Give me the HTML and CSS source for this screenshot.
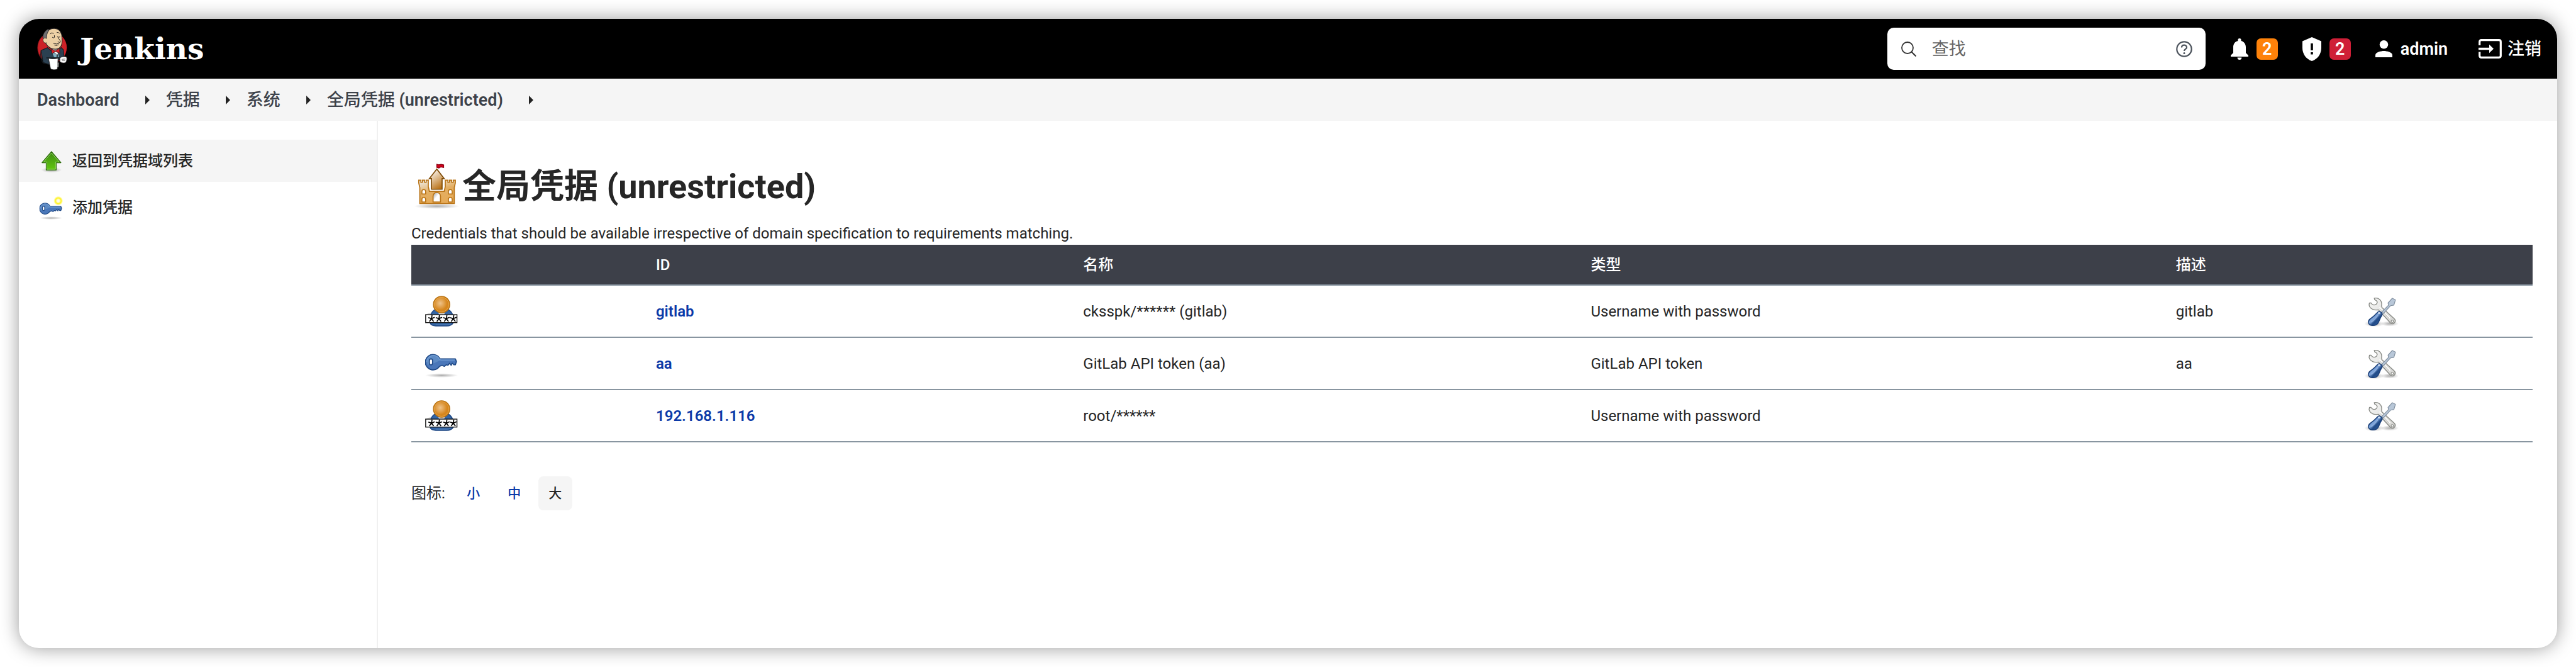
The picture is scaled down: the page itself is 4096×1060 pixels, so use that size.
FILE: index.html
```html
<!DOCTYPE html>
<html lang="zh-CN">
<head>
<meta charset="utf-8">
<title>全局凭据 (unrestricted) [Jenkins]</title>
<link rel="stylesheet" href="styles.css">
</head>
<body>
<svg class="sprite" aria-hidden="true">
  <defs>
    <linearGradient id="g-green" x1="0" y1="0" x2="0" y2="1"><stop offset="0" stop-color="#3d8a14"/><stop offset="1" stop-color="#62c810"/></linearGradient>
    <linearGradient id="g-tower" x1="0.2" y1="0" x2="0.7" y2="1"><stop offset="0" stop-color="#fff"/><stop offset="1" stop-color="#b86e10"/></linearGradient>
    <linearGradient id="g-wall" x1="0" y1="0" x2="0.4" y2="1"><stop offset="0" stop-color="#eee"/><stop offset="0.55" stop-color="#e3ae62"/><stop offset="1" stop-color="#e6ab58"/></linearGradient>
    <linearGradient id="g-gate" x1="0" y1="0" x2="0.7" y2="0.7"><stop offset="0" stop-color="#999"/><stop offset="0.7" stop-color="#fff"/></linearGradient>
    <linearGradient id="g-steel" x1="0" y1="0" x2="1" y2="1"><stop offset="0" stop-color="#f7f7f6"/><stop offset="1" stop-color="#d3d3d0"/></linearGradient>
    <linearGradient id="g-handle" x1="0" y1="0" x2="1" y2="1"><stop offset="0" stop-color="#3465a4"/><stop offset="0.45" stop-color="#7fa6dc"/><stop offset="0.6" stop-color="#204a87"/><stop offset="1" stop-color="#3465a4"/></linearGradient>
    <radialGradient id="g-head" cx="0.42" cy="0.42" r="0.6"><stop offset="0" stop-color="#efc38a"/><stop offset="0.7" stop-color="#d6861d"/><stop offset="1" stop-color="#d6861d"/></radialGradient>
    <radialGradient id="g-glow"><stop offset="0" stop-color="#fff"/><stop offset="0.3" stop-color="#fffbd0"/><stop offset="0.6" stop-color="#fff31e"/><stop offset="1" stop-color="#fff31e" stop-opacity="0"/></radialGradient>
    <radialGradient id="g-shadow"><stop offset="0" stop-color="#000" stop-opacity="0.32"/><stop offset="1" stop-color="#000" stop-opacity="0"/></radialGradient>
  </defs>
  <symbol id="i-key" viewBox="0 0 64 64">
    <ellipse cx="31" cy="54" rx="31" ry="4" fill="url(#g-shadow)"/>
    <path d="M28 23H57L59 28L57 34H54L51 31L49 35L46 31L43 35L40 34L36 37L32 35L27 37A14.500 14.500 0 1 1 28 23Z" fill="#4a77b9" stroke="#204a87" stroke-width="2" stroke-linejoin="round"/>
    <path d="M3 29A12.500 12.500 0 0 1 27 24L30 25H56" fill="none" stroke="#6f9bd2" stroke-width="2"/>
    <path d="M4 34C14 34 20 29 28 26A12.500 12.500 0 0 0 4 26Z" fill="#729fcf" opacity="0.5"/>
    <rect x="8" y="23" width="6" height="11" rx="3" fill="#fff" stroke="#204a87" stroke-width="2"/>
  </symbol>
  <symbol id="i-user" viewBox="0 0 64 64">
    <path d="M2 38C6 34 12 35 16 34V40H2Z" fill="#aaa" opacity="0.6"/>
    <path d="M10 42C12 31 18 26 31 26S50 31 53 42V53C50 58 46 59 41 59H20C15 59 12 58 10 55Z" fill="#3465a4" stroke="#204a87" stroke-width="2"/>
    <path d="M20 57H40C46 57 48 56 50 53" fill="none" stroke="#729fcf" stroke-width="1" opacity="0.6"/>
    <path d="M24 30H38L36 38H26Z" fill="#d9d9d9"/>
    <circle cx="31" cy="19" r="15.500" fill="url(#g-head)" stroke="#b56d0a" stroke-width="1.500"/>
    <circle cx="31" cy="19" r="13.800" fill="none" stroke="#e9a84e" stroke-width="1"/>
    <rect x="1" y="38" width="59" height="15" fill="#fff" stroke="#111" stroke-width="1.600"/>
    <g fill="none" stroke="#000" stroke-width="2">
      <path id="i-star" d="M12 45.500L13 39M12 45.500L18 43M12 45.500L6 43.500M12 45.500L8 51M12 45.500L16 51"/>
      <use href="#i-star" x="14"/><use href="#i-star" x="28"/><use href="#i-star" x="41"/>
    </g>
  </symbol>
  <symbol id="i-tools" viewBox="0 0 64 64">
    <ellipse cx="18" cy="55" rx="19" ry="6" fill="url(#g-shadow)"/>
    <ellipse cx="47" cy="55" rx="17" ry="5" fill="url(#g-shadow)"/>
    <path d="M18 7C26 5 32 11 32 18C32 21 31 23 33 25L56 46C60 50 56 56 51 55L48 53L26 29C22 29 19 30 15 28C10 26 7 21 9 16L12 16C14 20 19 21 22 18C25 15 24 12 19 10Z" fill="url(#g-steel)" stroke="#888a85" stroke-width="1.600" stroke-linejoin="round"/>
    <path d="M28 24L48 45" stroke="#fff" stroke-width="2"/>
    <path d="M29 27L46 45" stroke="#babdb6" stroke-width="1"/>
    <circle cx="52" cy="50.500" r="2.200" fill="#fff" stroke="#888a85" stroke-width="1.400"/>
    <path d="M32 33L45 20L44 16L52 7L58 10L55 20L49 21L35 36Z" fill="#b8c7d8" stroke="#8290a0" stroke-width="1.400" stroke-linejoin="round"/>
    <path d="M25 33C29 30 35 36 32 40C29 44 28 49 25 54C21 60 9 60 7 53C6 46 15 44 20 38Z" fill="url(#g-handle)" stroke="#1b3f78" stroke-width="1.800"/>
    <path d="M12 52C17 50 21 44 25 39" fill="none" stroke="#9dbbe6" stroke-width="2" opacity="0.7"/>
    <circle cx="27" cy="35" r="2" fill="#dfe9f7" opacity="0.8"/>
  </symbol>
</svg>

<div class="window">
  <header class="header">
    <a class="logo" href="#">
      <svg class="butler" viewBox="0 0 170 237" aria-hidden="true">
        <ellipse cx="85" cy="112" rx="82" ry="86" fill="#cc2127"/>
        <path d="M85 26A82 86 0 0 0 3 112C3 140 14 165 30 178" fill="none" stroke="#8c161b" stroke-width="3"/>
        <path d="M22 128L58 112L104 150L136 112L148 124L152 168L130 174L100 206L66 206L34 196Z" fill="#2b4051" stroke="#151a1f" stroke-width="4" stroke-linejoin="round"/>
        <path d="M22 130C16 160 24 190 36 200L70 206" fill="none" stroke="#151a1f" stroke-width="4"/>
        <path d="M80 118L108 168L130 118L100 112Z" fill="#fff" stroke="#151a1f" stroke-width="2"/>
        <path d="M80 132L94 166L112 170L108 148ZM128 132L124 166L112 170Z" fill="#81b0c4" stroke="#151a1f" stroke-width="2"/>
        <path d="M46 70C46 34 60 2 98 4C128 6 140 30 140 56C142 76 142 98 130 110C118 122 96 124 78 116C64 110 54 98 48 86Z" fill="#ecd0a5" stroke="#231f20" stroke-width="4"/>
        <path d="M58 10C42 20 32 38 32 56L42 64L54 60C52 44 56 28 70 10Z" fill="#6f6f70" stroke="#231f20" stroke-width="3"/>
        <path d="M52 60C40 54 30 62 34 74C38 86 46 88 54 84" fill="#ecd0a5" stroke="#231f20" stroke-width="3"/>
        <path d="M74 34Q82 24 92 32M112 26Q122 24 126 32M86 54Q92 62 98 54L97 44M114 50Q122 58 128 52M118 56C126 68 134 76 130 82C126 84 120 82 118 78M92 88Q110 96 124 88M98 98Q110 104 120 96" fill="none" stroke="#231f20" stroke-width="3.500" stroke-linecap="round"/>
        <path d="M78 118L102 130L126 116L128 144L104 134L84 146Z" fill="#d81f27" stroke="#231f20" stroke-width="3" stroke-linejoin="round"/>
        <path d="M64 172C80 176 98 176 118 172L114 234C102 238 86 238 76 232Z" fill="#fff" stroke="#231f20" stroke-width="3"/>
        <path d="M118 196L117 222" stroke="#ccc" stroke-width="6"/>
        <path d="M128 170C138 162 160 160 166 166C170 176 166 190 160 196C148 202 134 196 128 190Z" fill="#fff" stroke="#231f20" stroke-width="3"/>
        <path d="M138 178L160 176M140 186L158 186" stroke="#555" stroke-width="3"/>
        <path d="M52 170H130" stroke="#151a1f" stroke-width="5"/>
      </svg>
      <span class="logo-name">Jenkins</span>
    </a>
    <form class="search" role="search">
      <svg class="search-icon" viewBox="0 0 24 24" aria-hidden="true"><circle cx="10" cy="10" r="9" fill="none" stroke="#333" stroke-width="1.800"/><path d="M16 16L23.500 23.500" stroke="#333" stroke-width="2"/></svg>
      <input class="search-input" type="text" placeholder="查找" aria-label="查找">
      <a class="help" href="#" aria-label="帮助">
        <svg viewBox="0 0 26 26" aria-hidden="true"><circle cx="13" cy="13" r="11.700" fill="none" stroke="#4d545d" stroke-width="2.200"/><path d="M9 10.500C9 5.500 17 5.500 17 10.200C17 13 13 13 13 16" fill="none" stroke="#4d545d" stroke-width="2.200"/><circle cx="13" cy="19.400" r="1.500" fill="#4d545d"/></svg>
      </a>
    </form>
    <nav class="tools">
      <a class="alert" href="#" aria-label="通知">
        <svg class="bell" viewBox="0 0 28 34" aria-hidden="true"><path d="M14 0A2.600 2.600 0 0 1 16.600 2.600V4C21.500 5.200 24 9.500 24 14V23L28 27V29H0V27L4 23V14C4 9.500 6.500 5.200 11.400 4V2.600A2.600 2.600 0 0 1 14 0ZM10.600 30.500H17.400A3.400 3.400 0 0 1 10.600 30.500Z" fill="#fff"/></svg>
        <span class="badge badge-warn">2</span>
      </a>
      <a class="alert" href="#" aria-label="安全警告">
        <svg class="shield" viewBox="0 0 30 38" aria-hidden="true"><path d="M15 0L30 6.500V17C30 27 24 35 15 38C6 35 0 27 0 17V6.500Z" fill="#fff"/><path d="M13.200 10H16.800V21H13.200ZM13.200 24H16.800V27.600H13.200Z" fill="#000"/></svg>
        <span class="badge badge-error">2</span>
      </a>
      <a class="account" href="#">
        <svg class="person" viewBox="0 0 27 27" aria-hidden="true"><circle cx="13.500" cy="6.800" r="6.800" fill="#fff"/><path d="M0 27V23.500C0 19 9 17 13.500 17S27 19 27 23.500V27Z" fill="#fff"/></svg>
        <span>admin</span>
      </a>
      <a class="logout" href="#">
        <svg class="exit" viewBox="0 0 37 31" aria-hidden="true"><path d="M1.700 10V4.500Q1.700 1.700 4.500 1.700H32.500Q35.300 1.700 35.300 4.500V26.500Q35.300 29.300 32.500 29.300H4.500Q1.700 29.300 1.700 26.500V20.500" fill="none" stroke="#fff" stroke-width="3.200"/><path d="M0 13.800H17V8.700L24 15.500L17 22.300V17.200H0Z" fill="#fff"/></svg>
        <span>注销</span>
      </a>
    </nav>
  </header>

  <nav class="breadcrumbs">
    <a href="#"><b>Dashboard</b></a><i class="arrow"></i>
    <a href="#">凭据</a><i class="arrow"></i>
    <a href="#">系统</a><i class="arrow"></i>
    <a href="#">全局凭据 <b>(unrestricted)</b></a><i class="arrow"></i>
  </nav>

  <div class="page">
    <aside class="sidebar">
      <a class="task task-active" href="#">
        <svg class="task-icon" viewBox="0 0 48 48" aria-hidden="true"><ellipse cx="25" cy="41" rx="20" ry="5" fill="url(#g-shadow)"/><path d="M25 6L43 27H34V41H15V27H7Z" fill="url(#g-green)" stroke="#2c6b0a" stroke-width="1.500" stroke-linejoin="round"/><path d="M25 8.500L40 25.700H32.700V39.600H16.300V25.700H10Z" fill="none" stroke="#a5dd7b" stroke-width="1"/></svg>
        <span>返回到凭据域列表</span>
      </a>
      <a class="task" href="#">
        <svg class="task-icon" viewBox="0 0 48 48" aria-hidden="true"><use href="#i-key" width="46" height="46" x="2" y="5"/><circle cx="38" cy="11" r="9" fill="url(#g-glow)"/></svg>
        <span>添加凭据</span>
      </a>
    </aside>

    <main class="content">
      <h1 class="title">
        <svg class="title-icon" viewBox="0 0 96 96" aria-hidden="true">
          <ellipse cx="48" cy="85" rx="43" ry="5" fill="url(#g-shadow)"/>
          <path d="M14 36V41L16 50V80H81V50L83 41V36H79V40H76V36H72V40H69V36H64V48L62 57H34L32 48V36H28V40H25V36H21V40H18V36Z" fill="url(#g-wall)" stroke="#b87214" stroke-width="2"/>
          <path d="M48 15L34 33H38V53H58V33H62Z" fill="url(#g-tower)" stroke="#7d4a05" stroke-width="2"/>
          <path d="M41 77V66A7 7 0 0 1 55 66V77Z" fill="url(#g-gate)" stroke="#b87214" stroke-width="2"/>
          <g fill="#fff" stroke="#b87214" stroke-width="1.800"><path d="M20 62V57A3.500 3.500 0 0 1 27 57V62ZM70 62V57A3.500 3.500 0 0 1 77 57V62ZM20 77V72A3.500 3.500 0 0 1 27 72V77ZM70 77V72A3.500 3.500 0 0 1 77 72V77Z"/></g>
          <path d="M48 6L52 7L56 6L61 7V12L56 11L52 13L48 12Z" fill="#d0021b" stroke="#8f0012" stroke-width="1.500"/>
        </svg>
        <span>全局凭据 (unrestricted)</span>
      </h1>
      <p class="description">Credentials that should be available irrespective of domain specification to requirements matching.</p>
      <table class="credentials">
        <colgroup><col class="col-icon"><col class="col-id"><col class="col-name"><col class="col-type"><col class="col-desc"><col class="col-tools"></colgroup>
        <thead>
          <tr><th></th><th>ID</th><th>名称</th><th>类型</th><th>描述</th><th></th></tr>
        </thead>
        <tbody>
          <tr>
            <td><svg class="row-icon" aria-hidden="true"><use href="#i-user"/></svg></td>
            <td><a href="#">gitlab</a></td><td>cksspk/****** (gitlab)</td><td>Username with password</td><td>gitlab</td>
            <td><a href="#" aria-label="更新"><svg class="row-icon" aria-hidden="true"><use href="#i-tools"/></svg></a></td>
          </tr>
          <tr>
            <td><svg class="row-icon" aria-hidden="true"><use href="#i-key"/></svg></td>
            <td><a href="#">aa</a></td><td>GitLab API token (aa)</td><td>GitLab API token</td><td>aa</td>
            <td><a href="#" aria-label="更新"><svg class="row-icon" aria-hidden="true"><use href="#i-tools"/></svg></a></td>
          </tr>
          <tr>
            <td><svg class="row-icon" aria-hidden="true"><use href="#i-user"/></svg></td>
            <td><a href="#">192.168.1.116</a></td><td>root/******</td><td>Username with password</td><td></td>
            <td><a href="#" aria-label="更新"><svg class="row-icon" aria-hidden="true"><use href="#i-tools"/></svg></a></td>
          </tr>
        </tbody>
      </table>
      <div class="sizes">
        <span class="sizes-label">图标:</span>
        <a class="size" href="#">小</a>
        <a class="size" href="#">中</a>
        <span class="size size-current">大</span>
      </div>
    </main>
  </div>
</div>
</body>
</html>
```

FILE: styles.css
```css
* { box-sizing: border-box; }

body {
  margin: 0;
  padding: 30px;
  min-height: 100vh;
  display: flex;
  background: #fff;
  color: #262626;
  font-family: Roboto, "Noto Sans CJK SC", sans-serif;
  font-size: 24px;
  line-height: 36px;
}

a { color: inherit; text-decoration: none; }
svg { display: block; flex: none; }
.sprite { position: absolute; width: 0; height: 0; }

.window {
  flex: 1;
  min-width: 0;
  display: flex;
  flex-direction: column;
  overflow: hidden;
  border-radius: 32px;
  background: #fff;
  box-shadow: 0 0 30px rgba(0, 0, 0, 0.4);
}

/* Header */
.header {
  display: flex;
  align-items: center;
  height: 95px;
  padding: 0 25px 0 29px;
  background: #000;
  color: #fff;
  font-size: 27px;
  font-weight: 500;
}
.logo { display: flex; align-items: center; gap: 20px; margin-right: auto; }
.butler { width: 48px; height: 67px; }
.logo-name {
  font: bold 47px/60px "DejaVu Serif", serif;
}

.search {
  display: flex;
  align-items: center;
  width: 506px;
  height: 67px;
  margin-right: 40px;
  padding: 0 21px 0 22px;
  border-radius: 10px;
  background: #fff;
}
.search-icon { width: 24px; height: 24px; }
.search-input {
  flex: 1;
  min-width: 0;
  height: 60px;
  margin: 0;
  padding: 0 25px;
  border: 0;
  outline: 0;
  background: none;
  color: #333;
  font: inherit;
  font-weight: 400;
}
.search-input::placeholder { color: #666; opacity: 1; }
.help svg { width: 26px; height: 26px; }

.tools { display: flex; align-items: center; }
.alert, .account, .logout { display: flex; align-items: center; }
.alert { gap: 13px; margin-right: 39px; }
.account { gap: 13px; margin-right: 49px; font-weight: 600; }
.logout { gap: 9px; }
.bell { width: 28px; height: 34px; }
.shield { width: 30px; height: 38px; }
.person { width: 27px; height: 27px; }
.exit { width: 37px; height: 31px; }
.badge {
  width: 34px;
  height: 34px;
  border-radius: 7px;
  font-weight: 600;
  line-height: 34px;
  text-align: center;
}
.badge-warn { background: #fe820a; }
.badge-error { background: #cf1f37; }

/* Breadcrumbs */
.breadcrumbs {
  display: flex;
  align-items: center;
  height: 67px;
  padding: 0 29px;
  background: #f5f5f5;
  color: #3d424a;
  font-size: 27px;
  font-weight: 500;
}
.breadcrumbs b { font-weight: 600; }
.arrow {
  width: 0;
  height: 0;
  margin: 0 26px 0 41px;
  border: 7px solid transparent;
  border-left-color: #222;
  border-right-width: 0;
}

.page { flex: 1; display: flex; }

/* Sidebar */
.sidebar {
  display: flex;
  flex-direction: column;
  gap: 7px;
  width: 571px;
  padding-top: 30px;
  border-right: 2px solid #f0f0f0;
}
.task {
  display: flex;
  align-items: center;
  gap: 14px;
  height: 67px;
  padding-left: 31px;
  font-weight: 500;
}
.task-active { background: #f5f5f5; }
.task-icon { width: 40px; height: 40px; }

/* Main content */
.content { flex: 1; min-width: 0; padding: 64px 39px 64px 53px; }
.title {
  display: flex;
  align-items: center;
  height: 81px;
  margin: 0 0 16px;
  font-size: 54px;
  font-weight: 700;
  line-height: 80px;
}
.title-icon { width: 81px; height: 81px; }
.description { margin: 0; }

.credentials {
  width: 100%;
  table-layout: fixed;
  border-collapse: separate;
  border-spacing: 0;
}
.col-icon { width: 10.88%; }
.col-id { width: 20.14%; }
.col-name { width: 23.93%; }
.col-type { width: 27.58%; }
.col-desc { width: 8.9%; }
.col-tools { width: 8.57%; }
.credentials th, .credentials td {
  padding: 0 22px;
  border-bottom: 2px solid #8895a0;
  text-align: left;
}
.credentials th {
  height: 65px;
  background: #3d4049;
  color: #fff;
  font-weight: 500;
}
.credentials td { height: 83px; }
.credentials td a { color: #0b3aa8; font-weight: 600; }
.row-icon { width: 54px; height: 54px; }

.sizes {
  display: flex;
  align-items: center;
  gap: 11px;
  margin-top: 54px;
}
.sizes-label { margin-right: 7px; }
.size {
  width: 54px;
  height: 54px;
  border-radius: 8px;
  color: #0b3aa8;
  font-size: 21px;
  font-weight: 500;
  line-height: 54px;
  text-align: center;
}
.size-current { background: #f5f5f5; color: #262626; }
```
